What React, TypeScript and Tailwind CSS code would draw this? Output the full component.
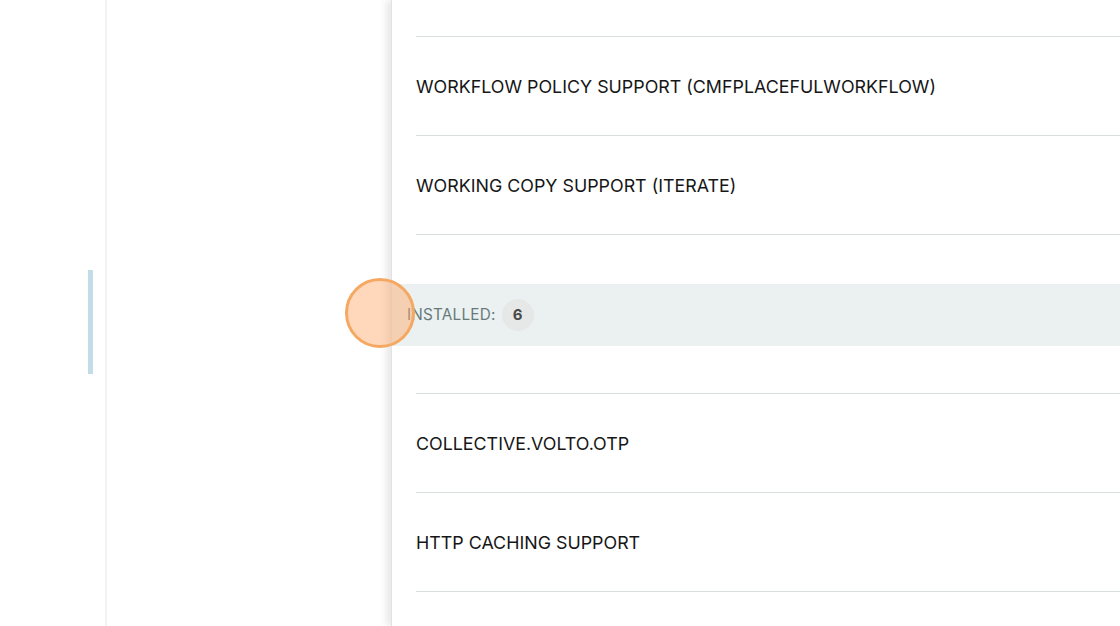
import React from 'react';

const topRows = ['WORKFLOW POLICY SUPPORT (CMFPLACEFULWORKFLOW)', 'WORKING COPY SUPPORT (ITERATE)'];
const installedRows = ['COLLECTIVE.VOLTO.OTP', 'HTTP CACHING SUPPORT'];

const Row = ({ label }: { label: string }) => (
  <div className="h-[99px] flex items-center pt-[3px] border-b border-[#d9dfe0] text-[17.85px] text-[#161616]">
    {label}
  </div>
);

export default function App() {
  return (
    <div
      className="relative flex h-[626px] w-[1120px] overflow-hidden bg-white"
      style={{ fontFamily: 'Inter, "Noto Sans", sans-serif' }}
    >
      {/* left rail */}
      <div className="w-[105px] shrink-0 pt-[270px] pl-[88px]">
        <div className="h-[104px] w-[5px] bg-[#c3dde8]" />
      </div>

      {/* sidebar panel */}
      <div className="w-[286px] shrink-0 border-l-2 border-[#f2f3f3]" />

      {/* main list */}
      <div className="flex-1 border-l border-[#dfe3e4] shadow-[-5px_0_7px_rgba(0,0,0,0.09)] z-10 bg-white">
        <div className="pl-[24px]">
          <div className="h-[37px] border-b border-[#d9dfe0]" />
          {topRows.map(r => (
            <Row key={r} label={r} />
          ))}
        </div>

        <div className="mt-[49px] h-[62px] bg-[#ebf1f1] flex items-center pl-[15px] gap-[6px]">
          <span className="text-[15.3px] text-[#687a7b] tracking-[0.2px]">INSTALLED:</span>
          <span className="flex h-[32px] w-[32px] items-center justify-center rounded-full bg-[#e6e8e8] text-[15px] font-bold text-[#4a4a4a]">
            6
          </span>
        </div>

        <div className="pl-[24px]">
          <div className="h-[48px] border-b border-[#d9dfe0]" />
          {installedRows.map(r => (
            <Row key={r} label={r} />
          ))}
        </div>
      </div>

      {/* click indicator */}
      <div className="absolute left-[345px] top-[278px] z-20 h-[70px] w-[70px] rounded-full border-[3px] border-[#f5a862] bg-[rgba(255,166,102,0.45)]" />
    </div>
  );
}
